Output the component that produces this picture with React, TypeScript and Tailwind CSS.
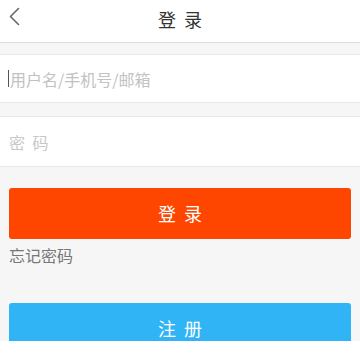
export default function App() {
  const font = { fontFamily: '"Noto Sans CJK SC", "Noto Sans", sans-serif' };
  return (
    <div className="min-h-[341px] w-[360px] bg-[#f6f6f6] overflow-hidden" style={font}>
      {/* Header */}
      <div className="relative h-[43px] bg-white border-b border-[#dcdcdc] flex justify-center">
        <svg
          className="absolute left-0 top-0"
          width="28"
          height="34"
          viewBox="0 0 28 34"
          fill="none"
        >
          <polyline
            points="18.5,8.5 10.5,16.5 18.5,24.5"
            stroke="#666"
            strokeWidth="1.6"
            strokeLinecap="round"
            strokeLinejoin="round"
          />
        </svg>
        <h1 className="pt-[7px] text-[18px] leading-[24px] text-[#333] tracking-[2px] pl-[2px]">
          登 录
        </h1>
      </div>

      {/* Username */}
      <div className="mt-[11px] h-[49px] bg-white border-y border-[#e8e8e8] flex items-center pl-[8px]">
        <span className="w-px h-[17px] bg-[#555] mr-[1px]" />
        <span className="text-[16px] text-[#c2c2c2] leading-none">用户名/手机号/邮箱</span>
      </div>

      {/* Password */}
      <div className="mt-[13px] h-[51px] bg-white border-y border-[#e8e8e8] flex items-center pl-[9px]">
        <span className="text-[16px] text-[#c8c8c8] leading-none tracking-[2px]">密 码</span>
      </div>

      {/* Login button */}
      <div className="px-[9px]">
        <button className="mt-[21px] w-full h-[51px] rounded-[3px] bg-[#ff4600] text-white text-[18px] tracking-[2px] pl-[2px]">
          登 录
        </button>
        <p className="mt-[4px] text-[16px] leading-[24px] text-[#777]">忘记密码</p>
        <button className="mt-[36px] w-full h-[51px] rounded-[3px] bg-[#30b4f6] text-white text-[18px] tracking-[2px] pl-[2px]">
          注 册
        </button>
      </div>
    </div>
  );
}
